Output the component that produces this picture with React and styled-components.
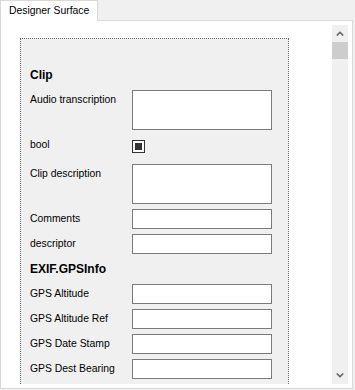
import React from 'react';
import styled, { createGlobalStyle } from 'styled-components';

const GlobalStyle = createGlobalStyle`
  html, body {
    margin: 0;
    padding: 0;
    background: #f0f0f0;
  }
  body {
    font-family: "Liberation Sans", Arial, sans-serif;
    font-size: 10.4px;
    color: #000;
  }
`;

const Window = styled.div`
  width: 355px;
  height: 390px;
  display: flex;
  flex-direction: column;
`;

const TabStrip = styled.div`
  display: flex;
  height: 20px;
`;

const Tab = styled.div`
  position: relative;
  z-index: 1;
  box-sizing: border-box;
  width: 98px;
  height: 21px;
  padding-left: 8px;
  line-height: 20px;
  background: #fff;
  border: 1px solid #d9d9d9;
  border-bottom: none;
  white-space: nowrap;
`;

const TabPanel = styled.div`
  box-sizing: border-box;
  width: 353px;
  height: 369px;
  padding: 4px;
  display: flex;
  background: #fff;
  border: 1px solid #d9d9d9;
`;

const Viewport = styled.div`
  flex: 1;
  overflow: hidden;
  background: #fff;
`;

const Scrollbar = styled.div`
  width: 16px;
  display: flex;
  flex-direction: column;
  background: #f0f0f0;
`;

const ArrowButton = styled.div`
  height: 17px;
  display: flex;
  align-items: center;
  justify-content: center;
  color: #606060;
`;

const Thumb = styled.div`
  height: 17px;
  background: #cdcdcd;
`;

const Track = styled.div`
  flex: 1;
`;

const Surface = styled.div`
  box-sizing: border-box;
  width: 269px;
  margin: 13px 0 0 15px;
  padding: 26px 0 20px 9px;
  border: 1px dotted #6a6a6a;
  background: #f0f0f0;
  display: grid;
  grid-template-columns: 102px 140px;
  row-gap: 5px;
`;

const Section = styled.div`
  grid-column: 1 / -1;
  height: 20px;
  line-height: 20px;
  font-size: 12px;
  font-weight: bold;
`;

const Label = styled.div`
  line-height: 20px;
  white-space: nowrap;
`;

const TextBox = styled.div`
  box-sizing: border-box;
  height: ${p => (p.$multi ? 40 : 20)}px;
  background: #fff;
  border: 1px solid #7a7a7a;
`;

const CheckCell = styled.div`
  height: 24px;
`;

const CheckBox = styled.div`
  box-sizing: border-box;
  width: 13px;
  height: 13px;
  margin-top: 5px;
  padding: 2px;
  background: #fff;
  border: 1px solid #333;
  &::after {
    content: '';
    display: block;
    width: 7px;
    height: 7px;
    background: #333;
  }
`;

const Chevron = ({ down }) => (
  <svg width="8" height="5" viewBox="0 0 8 5" style={down ? { transform: 'rotate(180deg)' } : undefined}>
    <path d="M0.8 4.5 L4 1.3 L7.2 4.5" fill="none" stroke="currentColor" strokeWidth="1.6" />
  </svg>
);

const fields = [
  { section: 'Clip' },
  { label: 'Audio transcription', multi: true },
  { label: 'bool', check: true },
  { label: 'Clip description', multi: true },
  { label: 'Comments' },
  { label: 'descriptor' },
  { section: 'EXIF.GPSInfo' },
  { label: 'GPS Altitude' },
  { label: 'GPS Altitude Ref' },
  { label: 'GPS Date Stamp' },
  { label: 'GPS Dest Bearing' },
];

const App = () => {
  return (
    <Window>
      <GlobalStyle />
      <TabStrip>
        <Tab>Designer Surface</Tab>
      </TabStrip>
      <TabPanel>
        <Viewport>
          <Surface>
            {fields.map((f, i) =>
              f.section ? (
                <Section key={i}>{f.section}</Section>
              ) : (
                <React.Fragment key={i}>
                  <Label>{f.label}</Label>
                  {f.check ? (
                    <CheckCell>
                      <CheckBox />
                    </CheckCell>
                  ) : (
                    <TextBox $multi={f.multi} />
                  )}
                </React.Fragment>
              )
            )}
          </Surface>
        </Viewport>
        <Scrollbar>
          <ArrowButton>
            <Chevron />
          </ArrowButton>
          <Thumb />
          <Track />
          <ArrowButton>
            <Chevron down />
          </ArrowButton>
        </Scrollbar>
      </TabPanel>
    </Window>
  );
};

export default App;
